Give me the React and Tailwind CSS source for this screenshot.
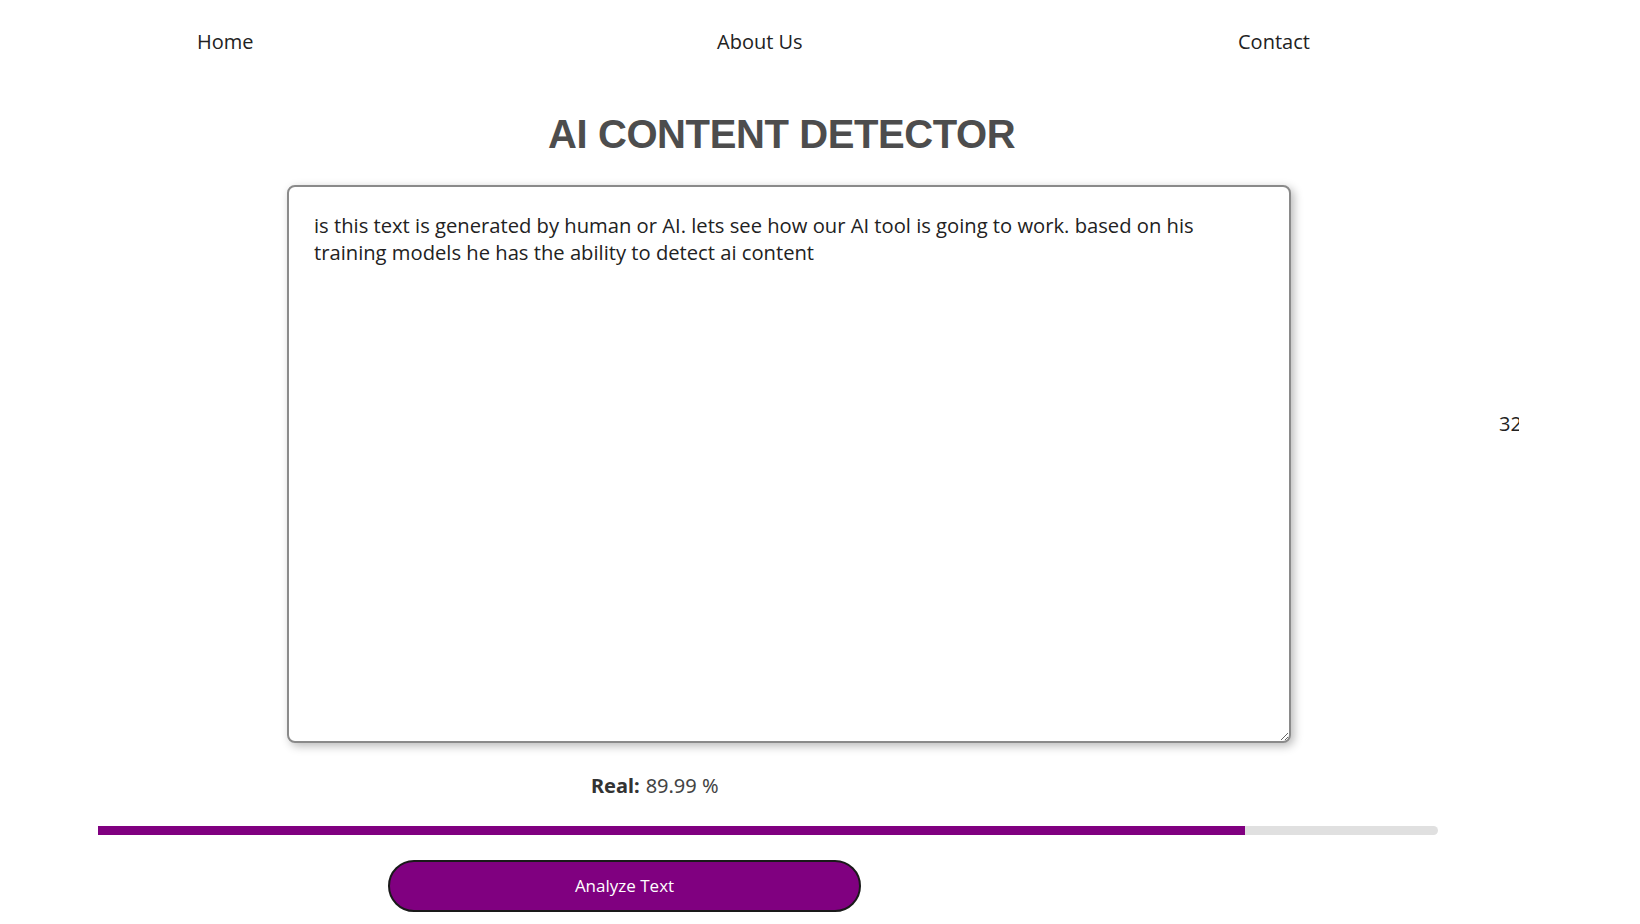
const SAMPLE =
  'is this text is generated by human or AI. lets see how our AI tool is going to work. based on his training models he has the ability to detect ai content'

function NavBar() {
  return (
    <nav className="flex items-center h-[84px] text-[20px] text-[#222] font-['Open_Sans',sans-serif]">
      <a className="ml-[197px] w-[520px]">Home</a>
      <a className="w-[521px]">About Us</a>
      <a>Contact</a>
    </nav>
  )
}

export default function App() {
  return (
    <div className="w-[1640px] h-[924px] bg-white overflow-hidden">
      <NavBar />

      <h1 className="mt-[28px] ml-[548px] text-[40px] leading-[44px] font-bold tracking-[-0.4px] text-[#4d4d4d] font-['Liberation_Sans',Arial,sans-serif]">
        AI CONTENT DETECTOR
      </h1>

      <div className="flex items-start mt-[29px]">
        <textarea
          defaultValue={SAMPLE}
          className="ml-[287px] w-[1004px] h-[558px] rounded-[8px] border-2 border-[#8a8a8a] bg-white pl-[25px] pr-[90px] py-[25px] text-[20.2px] leading-[27px] text-[#222] outline-none shadow-[3px_3px_10px_rgba(0,0,0,0.28)] font-['Open_Sans',sans-serif]"
        />
        <span className="ml-[208px] mt-[224px] w-[20px] overflow-hidden whitespace-nowrap text-[20px] text-[#222] font-['Open_Sans',sans-serif]">
          32
        </span>
      </div>

      <div className="flex items-baseline ml-[591px] mt-[28px] text-[20px] text-[#333] font-['Noto_Sans',sans-serif]">
        <span className="font-bold">Real:</span>
        <span className="ml-[6px] text-[#444]">89.99 %</span>
      </div>

      <div className="ml-[98px] mt-[25px] w-[1340px] h-[9px] rounded-r-full bg-[#e0e0e0] overflow-hidden">
        <div className="h-full w-[1147px] bg-[#800080]" />
      </div>

      <button className="ml-[388px] mt-[25px] w-[473px] h-[52px] rounded-full border-2 border-[#1a1a1a] bg-[#800080] text-white text-[17px] font-['Open_Sans',sans-serif]">
        Analyze Text
      </button>
    </div>
  )
}
